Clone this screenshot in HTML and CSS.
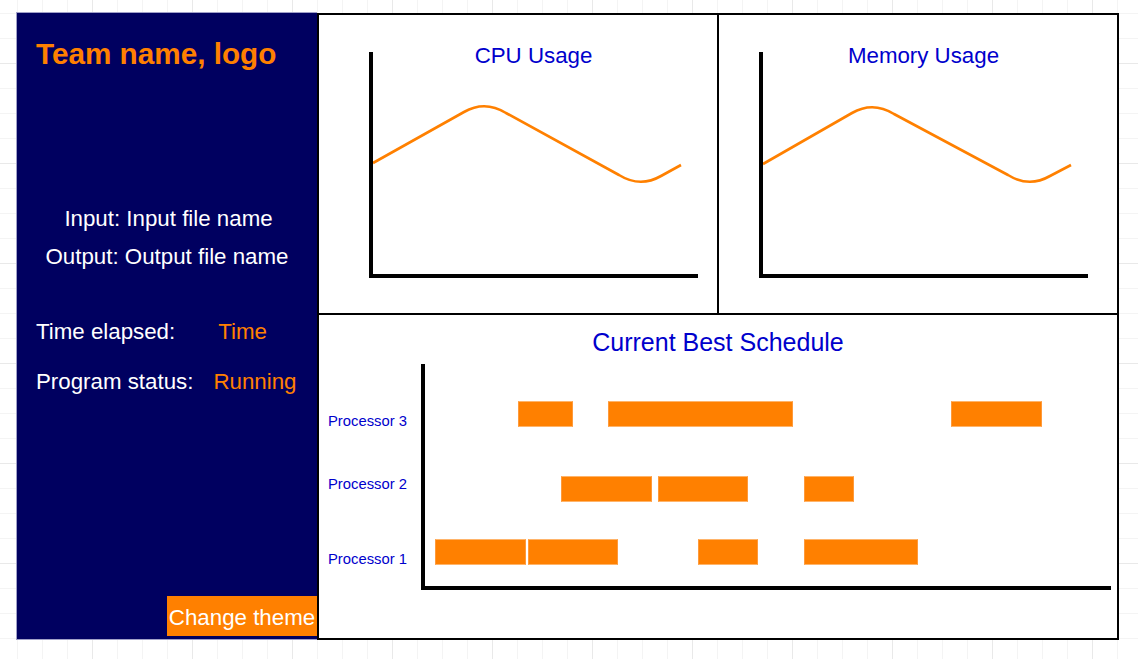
FILE: index.html
```html
<!DOCTYPE html>
<html lang="en">
<head>
<meta charset="utf-8">
<title>Scheduler Dashboard</title>
<link rel="stylesheet" href="styles.css">
</head>
<body>
<div class="page">
  <aside class="sidebar">
    <h1 class="brand">Team name, logo</h1>
    <div class="files">
      <p class="file-line file-in">Input: Input file name</p>
      <p class="file-line">Output: Output file name</p>
    </div>
    <div class="stats">
      <div class="stat stat-time"><span class="stat-label">Time elapsed:</span><span class="stat-value">Time</span></div>
      <div class="stat stat-status"><span class="stat-label">Program status:</span><span class="stat-value">Running</span></div>
    </div>
    <button class="theme-btn" type="button">Change theme</button>
  </aside>

  <main class="board">
    <div class="top-row">
      <section class="panel panel-cpu">
        <div class="chart">
          <h2 class="chart-title">CPU Usage</h2>
          <svg class="chart-svg" width="329" height="226" viewBox="0 0 329 226">
            <path class="curve" d="M4,111 L95,60 Q116,48 137,61 L250,123 Q271,136 292,124 L312,113"/>
            <rect x="0" y="0" width="4" height="226" fill="#000"/>
            <rect x="0" y="222" width="329" height="4" fill="#000"/>
          </svg>
        </div>
      </section>
      <section class="panel panel-mem">
        <div class="chart">
          <h2 class="chart-title">Memory Usage</h2>
          <svg class="chart-svg" width="329" height="226" viewBox="0 0 329 226">
            <path class="curve" d="M4,112 L93,61 Q114,49 135,62 L249,123 Q270,136 291,124 L312,113"/>
            <rect x="0" y="0" width="4" height="226" fill="#000"/>
            <rect x="0" y="222" width="329" height="4" fill="#000"/>
          </svg>
        </div>
      </section>
    </div>

    <section class="schedule">
      <h2 class="schedule-title">Current Best Schedule</h2>
      <div class="gantt">
        <div class="proc-labels">
          <span class="proc proc-3">Processor 3</span>
          <span class="proc proc-2">Processor 2</span>
          <span class="proc proc-1">Processor 1</span>
        </div>
        <div class="plot">
          <div class="lane lane-3">
            <span class="task" style="left:93px;width:55px"></span>
            <span class="task" style="left:183px;width:185px"></span>
            <span class="task" style="left:526px;width:91px"></span>
          </div>
          <div class="lane lane-2">
            <span class="task" style="left:136px;width:91px"></span>
            <span class="task" style="left:233px;width:90px"></span>
            <span class="task" style="left:379px;width:50px"></span>
          </div>
          <div class="lane lane-1">
            <span class="task" style="left:10px;width:91px"></span>
            <span class="task" style="left:103px;width:90px"></span>
            <span class="task" style="left:273px;width:60px"></span>
            <span class="task" style="left:379px;width:114px"></span>
          </div>
        </div>
      </div>
    </section>
  </main>
</div>
</body>
</html>
```

FILE: styles.css
```css
html, body {
  margin: 0;
  padding: 0;
}

body {
  width: 1138px;
  height: 659px;
  overflow: hidden;
  font-family: "Liberation Sans", Arial, sans-serif;
  background-color: #ffffff;
  background-image:
    linear-gradient(to right, #e9e9e9 1px, transparent 1px),
    linear-gradient(to bottom, #e9e9e9 1px, transparent 1px),
    linear-gradient(to right, #f4f4f4 1px, transparent 1px),
    linear-gradient(to bottom, #f4f4f4 1px, transparent 1px);
  background-size: 100px 100px, 100px 100px, 25px 25px, 25px 25px;
  background-position: 92px 0, 0 63px, 17px 0, 0 13px;
}

.page {
  display: flex;
  align-items: flex-start;
  padding: 12px 0 0 16px;
}

/* ---------- Sidebar ---------- */
.sidebar {
  box-sizing: border-box;
  width: 301px;
  height: 628px;
  background: #000060;
  border: 1px solid #a0a0c8;
  border-right: none;
  display: flex;
  flex-direction: column;
  padding: 24px 0 3px 0;
}

.brand {
  margin: 0;
  padding-left: 19px;
  font-size: 29.7px;
  line-height: 34px;
  font-weight: bold;
  color: #ff8000;
}

.files {
  margin-top: 129px;
  text-align: center;
}

.file-line {
  margin: 0;
  font-size: 22.3px;
  line-height: 38px;
  color: #ffffff;
}

.file-in {
  padding-left: 3px;
}

.stats {
  margin-top: 43px;
  padding-left: 19px;
}

.stat {
  display: flex;
  font-size: 22.3px;
  line-height: 25px;
  color: #ffffff;
}

.stat-status {
  margin-top: 25px;
}

.stat-value {
  color: #ff8000;
}

.stat-time .stat-value {
  margin-left: 43px;
}

.stat-status .stat-value {
  margin-left: 20px;
}

.theme-btn {
  margin-top: auto;
  align-self: flex-end;
  box-sizing: border-box;
  width: 150px;
  height: 40px;
  padding: 3px 0 0 0;
  border: none;
  background: #ff8000;
  color: #ffffff;
  font-family: "Liberation Sans", Arial, sans-serif;
  font-size: 22.3px;
  line-height: 25px;
  white-space: nowrap;
  text-align: center;
  overflow: visible;
}

/* ---------- Board ---------- */
.board {
  box-sizing: border-box;
  width: 802px;
  height: 627px;
  margin-top: 1px;
  border: 2px solid #000;
  background: #ffffff;
  display: flex;
  flex-direction: column;
}

.top-row {
  display: flex;
  height: 300px;
  box-sizing: border-box;
  border-bottom: 2px solid #000;
}

.panel {
  box-sizing: border-box;
  padding-top: 28px;
}

.panel-cpu {
  width: 400px;
  border-right: 2px solid #000;
  padding-left: 50px;
}

.panel-mem {
  width: 398px;
  padding-left: 40px;
}

.chart {
  display: grid;
  width: 329px;
}

.chart > * {
  grid-area: 1 / 1;
}

.chart-title {
  margin: 0;
  justify-self: center;
  align-self: start;
  font-size: 22.3px;
  line-height: 25px;
  font-weight: normal;
  color: #0000cc;
  position: relative;
  z-index: 1;
}

.chart-svg {
  display: block;
  margin-top: 9px;
}

.curve {
  fill: none;
  stroke: #ff8000;
  stroke-width: 2.6;
  stroke-linejoin: round;
}

/* ---------- Schedule ---------- */
.schedule {
  flex: 1;
  padding-top: 12px;
}

.schedule-title {
  margin: 0 0 7px 0;
  text-align: center;
  font-size: 25px;
  line-height: 30px;
  font-weight: normal;
  color: #0000cc;
}

.gantt {
  display: flex;
}

.proc-labels {
  width: 102px;
  display: flex;
  flex-direction: column;
  padding-left: 9px;
  box-sizing: border-box;
}

.proc {
  font-size: 14.8px;
  line-height: 17px;
  color: #0000cc;
  white-space: nowrap;
}

.proc-3 { margin-top: 49px; }
.proc-2 { margin-top: 46px; }
.proc-1 { margin-top: 58px; }

.plot {
  box-sizing: border-box;
  width: 690px;
  height: 226px;
  border-left: 4px solid #000;
  border-bottom: 4px solid #000;
  display: flex;
  flex-direction: column;
}

.lane {
  position: relative;
  height: 26px;
}

.lane-3 { margin-top: 37px; }
.lane-2 { margin-top: 49px; }
.lane-1 { margin-top: 37px; }

.task {
  position: absolute;
  top: 0;
  height: 26px;
  box-sizing: border-box;
  background: #ff8000;
  border: 1px solid #ffb46a;
  border-left-color: #ff9a3a;
  border-right-color: #ff9a3a;
}
```
